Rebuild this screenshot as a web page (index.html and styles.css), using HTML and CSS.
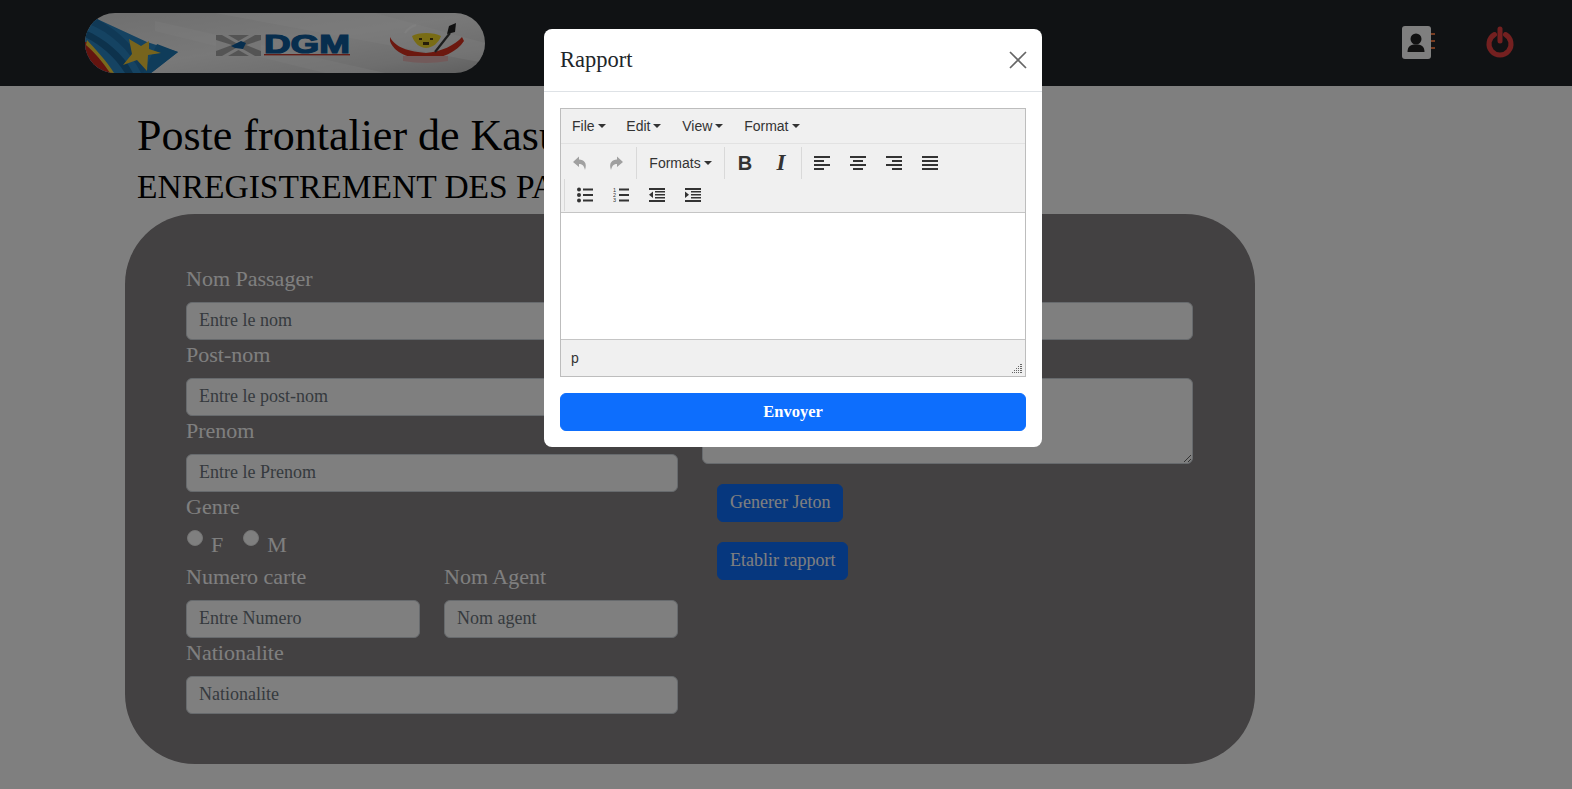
FILE: index.html
```html
<!DOCTYPE html>
<html lang="fr">
<head>
<meta charset="utf-8">
<title>Poste frontalier</title>
<link rel="stylesheet" href="styles.css">
</head>
<body>
<svg class="defs" width="0" height="0" aria-hidden="true">
  <defs>
    <linearGradient id="bannerBg" x1="0" y1="0" x2="1" y2="1">
      <stop offset="0" stop-color="#dedede"/>
      <stop offset="0.5" stop-color="#f2f2f2"/>
      <stop offset="0.8" stop-color="#dcdcdc"/>
      <stop offset="1" stop-color="#bdbdbd"/>
    </linearGradient>
    <clipPath id="bannerClip"><rect width="400" height="60" rx="30"/></clipPath>
  </defs>
</svg>
<header class="topbar">
  <svg class="banner" width="400" height="60" viewBox="0 0 400 60">
    <g clip-path="url(#bannerClip)">
      <rect width="400" height="60" fill="url(#bannerBg)"/>
      <path d="M130 0 L400 50 V30 L290 0Z" fill="#fff" opacity=".35"/>
      <path d="M70 8 L300 60 H240 L70 18Z" fill="#fff" opacity=".3"/>
      <path d="M10 5 L62 29 L93 39 L70 57 L66 60 H0 V20Z" fill="#2a86c4"/>
      <path d="M0 17 C20 26 38 40 48 60 H40 C30 44 16 32 0 24Z" fill="#1a6499"/>
      <path d="M10 5 C30 16 50 30 62 60 H56 C44 36 26 20 4 11Z" fill="#2072ac"/>
      <path d="M2 29 C10 38 20 48 27 60 H0 V29Z" fill="#c9281e"/>
      <path d="M2 27 C11 37 21 47 29 60 H25 C18 49 9 39 1 32Z" fill="#f2d23a"/>
      <path d="M70 57 L93 39 L72 31 L58 60 H66Z" fill="#1e78b4"/>
      <path d="M44 26 L56 33 L64 28 L64 36 L76 40 L63 42 L62 58 L52 47 L38 52 L47 41Z" fill="#efc93a"/>
      <path d="M131 22 h45 v21 h-45z" fill="#a9a9a9"/>
      <path d="M131 27 L147 32 L131 38Z M176 27 L161 32 L176 38Z" fill="#ececec"/>
      <path d="M137 22 L151 30 L156 30 L170 22 H164 L153.500 28 L143 22Z M137 43 L151 35 L156 35 L170 43 H164 L153.500 37 L143 43Z" fill="#ececec"/>
      <path d="M146 33 L156 28 L161 30 L158 36 L150 35Z" fill="#0f5c9c"/>
      <text class="dgm" x="179" y="40" textLength="86" lengthAdjust="spacingAndGlyphs">DGM</text>
      <rect x="179" y="41" width="86" height="1.400" fill="#c73a2c"/>
      <path d="M305 24 C309 32 318 38 341 40 C356 39 370 32 377 24 L379 28 C372 39 356 46 341 46 C325 46 309 40 305 28Z" fill="#d8301f"/>
      <path d="M327 23 C333 19 349 19 356 23 C354 30 347 35 341 35 C335 35 329 30 327 23Z" fill="#f2d92b"/>
      <path d="M334 25 h3 v2 h-3z M345 25 h3 v2 h-3z M338 29 h6 v3 h-6z" fill="#4d3d14"/>
      <path d="M350 39 L365 20" stroke="#3a3a3a" stroke-width="2.200"/>
      <path d="M362 21 L364 13 L371 10 L370 19Z" fill="#222"/>
      <path d="M318 43 H363 V48 Q341 52 318 48Z" fill="#e5b5b5"/>
      <path d="M320 20 Q324 14 331 12" stroke="#fff" stroke-width="2" fill="none"/>
    </g>
  </svg>
  <div class="actions">
    <svg class="book" width="33" height="34" viewBox="0 0 33 34">
      <rect x="0" y="0" width="29" height="33" rx="3" fill="#fff"/>
      <path d="M29 7h4v2h-4zM29 14h4v2h-4zM29 21h4v2h-4z" fill="#f07a45"/>
      <circle cx="14" cy="13" r="5.500" fill="#222"/>
      <path d="M5.500 26 C5.500 20 9 18.500 14 18.500 C19 18.500 22.500 20 22.500 26Z" fill="#222"/>
    </svg>
    <svg class="power" width="30" height="32" viewBox="0 0 30 32">
      <path d="M9.500 8.500 A11 11 0 1 0 20.500 8.500" fill="none" stroke="#e84040" stroke-width="5" stroke-linecap="round"/>
      <path d="M15 3 V15" fill="none" stroke="#e84040" stroke-width="5" stroke-linecap="round"/>
    </svg>
  </div>
</header>

<main class="page">
  <h1 class="title">Poste frontalier de Kasumbalesa</h1>
  <h3 class="subtitle">ENREGISTREMENT DES PASSAGERS</h3>
  <form class="card">
    <div class="col">
      <label class="lbl">Nom Passager</label>
      <input class="field" placeholder="Entre le nom">
      <label class="lbl">Post-nom</label>
      <input class="field" placeholder="Entre le post-nom">
      <label class="lbl">Prenom</label>
      <input class="field" placeholder="Entre le Prenom">
      <label class="lbl">Genre</label>
      <div class="radios">
        <input class="radio" type="radio" name="genre"><span class="radio-text">F</span>
        <input class="radio" type="radio" name="genre"><span class="radio-text">M</span>
      </div>
      <div class="pair">
        <div>
          <label class="lbl">Numero carte</label>
          <input class="field" placeholder="Entre Numero">
        </div>
        <div>
          <label class="lbl">Nom Agent</label>
          <input class="field" placeholder="Nom agent">
        </div>
      </div>
      <label class="lbl">Nationalite</label>
      <input class="field" placeholder="Nationalite">
    </div>
    <div class="col">
      <label class="lbl">Destination</label>
      <input class="field">
      <label class="lbl">Motif</label>
      <textarea class="field area"></textarea>
      <div class="btns">
        <button type="button" class="btn">Generer Jeton</button>
        <button type="button" class="btn">Etablir rapport</button>
      </div>
    </div>
  </form>
</main>

<div class="backdrop">
  <section class="modal">
    <div class="modal-head">
      <h5 class="modal-title">Rapport</h5>
      <svg class="close" width="18" height="18" viewBox="0 0 18 18"><path d="M1 1 L17 17 M17 1 L1 17" stroke="#666" stroke-width="1.700"/></svg>
    </div>
    <div class="modal-body">
      <div class="editor">
        <div class="menubar">
          <span class="menu-item caret">File</span>
          <span class="menu-item caret">Edit</span>
          <span class="menu-item caret">View</span>
          <span class="menu-item caret">Format</span>
        </div>
        <div class="toolbar">
          <div class="tb-row">
            <div class="tb-group first">
              <span class="tool off"><svg width="16" height="16" viewBox="0 0 16 16"><path d="M7 1.500 L1 7 L7 12 V9 C10 9 12 10.500 13 15 C15.500 8 12 4.500 7 4.500Z"/></svg></span>
              <span class="tool off"><svg width="16" height="16" viewBox="0 0 16 16"><path d="M9 1.500 L15 7 L9 12 V9 C6 9 4 10.500 3 15 C.5 8 4 4.500 9 4.500Z"/></svg></span>
            </div>
            <div class="tb-group tight">
              <span class="tool wide caret">Formats</span>
            </div>
            <div class="tb-group">
              <span class="tool"><b class="glyph-b">B</b></span>
              <span class="tool"><i class="glyph-i">I</i></span>
            </div>
            <div class="tb-group spaced">
              <span class="tool"><svg width="16" height="16" viewBox="0 0 16 16"><path d="M0 1h16v2H0zM0 5h10v2H0zM0 9h16v2H0zM0 13h10v2H0z"/></svg></span>
              <span class="tool"><svg width="16" height="16" viewBox="0 0 16 16"><path d="M0 1h16v2H0zM3 5h10v2H3zM0 9h16v2H0zM3 13h10v2H3z"/></svg></span>
              <span class="tool"><svg width="16" height="16" viewBox="0 0 16 16"><path d="M0 1h16v2H0zM6 5h10v2H6zM0 9h16v2H0zM6 13h10v2H6z"/></svg></span>
              <span class="tool"><svg width="16" height="16" viewBox="0 0 16 16"><path d="M0 1h16v2H0zM0 5h16v2H0zM0 9h16v2H0zM0 13h16v2H0z"/></svg></span>
            </div>
          </div>
          <div class="tb-row">
            <div class="tb-group indent">
              <span class="tool"><svg width="16" height="16" viewBox="0 0 16 16"><circle cx="2" cy="2.500" r="2"/><circle cx="2" cy="8" r="2"/><circle cx="2" cy="13.500" r="2"/><path d="M6 1.500h10v2H6zM6 7h10v2H6zM6 12.500h10v2H6z"/></svg></span>
              <span class="tool"><svg width="16" height="16" viewBox="0 0 16 16"><text class="nums" x="0" y="5">1</text><text class="nums" x="0" y="10">2</text><text class="nums" x="0" y="15">3</text><path d="M6 1.500h10v2H6zM6 7h10v2H6zM6 12.500h10v2H6z"/></svg></span>
              <span class="tool"><svg width="16" height="16" viewBox="0 0 16 16"><path d="M0 1h16v2H0zM6 4h10v1.500H6zM6 7h10v1.500H6zM6 10h10v1.500H6zM0 13h16v2H0zM4 4.500 V11 L0 7.750Z"/></svg></span>
              <span class="tool"><svg width="16" height="16" viewBox="0 0 16 16"><path d="M0 1h16v2H0zM6 4h10v1.500H6zM6 7h10v1.500H6zM6 10h10v1.500H6zM0 13h16v2H0zM0 4.500 V11 L4 7.750Z"/></svg></span>
            </div>
          </div>
        </div>
        <div class="edit-area"></div>
        <div class="statusbar">
          <span>p</span>
          <svg class="grip" width="10" height="10" viewBox="0 0 10 10"><path d="M8 0h2v1H8zM6 2h1v1H6zM8 2h2v1H8zM4 4h1v1H4zM6 4h1v1H6zM8 4h2v1H8zM2 6h1v1H2zM4 6h1v1H4zM6 6h1v1H6zM8 6h2v1H8zM0 8h1v1H0zM2 8h1v1H2zM4 8h1v1H4zM6 8h1v1H6zM8 8h2v1H8z" fill="#666"/></svg>
        </div>
      </div>
      <button type="button" class="send">Envoyer</button>
    </div>
  </section>
</div>
</body>
</html>
```
FILE: styles.css
```css
* { box-sizing: border-box; }
html, body { height: 100%; }
body {
  margin: 0;
  background: #fff;
  color: #000;
  font-family: "Liberation Serif", "Times New Roman", serif;
  font-size: 17.5px;
  overflow: hidden;
}
.defs { position: absolute; }

.topbar {
  height: 86px;
  background: #212529;
  display: flex;
  align-items: flex-start;
  justify-content: space-between;
  padding: 13px 57px 0 85px;
}
.banner { display: block; }
.actions {
  display: flex;
  align-items: flex-start;
  gap: 50px;
  padding-top: 13px;
}

.page { padding: 0 0 0 125px; }
.title {
  margin: 0;
  padding: 23px 0 0 12px;
  font-size: 44px;
  font-weight: 400;
  line-height: 54px;
  white-space: nowrap;
}
.subtitle {
  margin: 0;
  padding: 0 0 0 12px;
  font-size: 33.5px;
  font-weight: 400;
  line-height: 47px;
  white-space: nowrap;
}
.card {
  margin-top: 4px;
  width: 1130px;
  height: 550px;
  background: #868284;
  border-radius: 70px;
  padding: 50px 62px 50px 61px;
  display: grid;
  grid-template-columns: 492px 491px;
  column-gap: 24px;
}
.col { display: flex; flex-direction: column; }
.lbl {
  display: block;
  height: 38px;
  line-height: 30px;
  font-size: 22px;
  color: #fff;
}
.field {
  display: block;
  width: 100%;
  height: 38px;
  padding: 5px 12px 7px;
  font: 18px "Liberation Serif", serif;
  color: #212529;
  background: #fff;
  border: 1px solid #ced4da;
  border-radius: 6px;
}
.field::placeholder { color: #6c757d; opacity: 1; }
.area { height: 86px; resize: vertical; }
.radios {
  height: 32px;
  display: flex;
  align-items: flex-start;
  color: #fff;
  font-size: 22px;
  line-height: 30px;
}
.radio {
  appearance: none;
  width: 16px;
  height: 16px;
  margin: 0 8px 0 1px;
  background: #fff;
  border: 1px solid #e8e8e8;
  border-radius: 50%;
}
.radio-text { margin-right: 19px; }
.pair {
  display: grid;
  grid-template-columns: 234px 234px;
  column-gap: 24px;
}
.btns {
  display: flex;
  flex-direction: column;
  align-items: flex-start;
  gap: 20px;
  padding: 20px 0 0 15px;
}
.btn {
  height: 38px;
  padding: 0 12px 2px;
  font: 18px "Liberation Serif", serif;
  color: #fff;
  background: #0d6efd;
  border: 1px solid #0d6efd;
  border-radius: 6px;
}

.backdrop {
  position: fixed;
  inset: 0;
  background: rgba(0, 0, 0, .5);
  padding: 29px 0 0 14px;
  display: flex;
  justify-content: center;
  align-items: flex-start;
}
.modal {
  width: 498px;
  height: 418px;
  background: #fff;
  border-radius: 8px;
  display: flex;
  flex-direction: column;
}
.modal-head {
  height: 63px;
  flex: none;
  display: flex;
  align-items: center;
  justify-content: space-between;
  padding: 0 15px 0 16px;
  border-bottom: 1px solid #dee2e6;
}
.modal-title {
  margin: 0;
  font-size: 22.5px;
  font-weight: 400;
  color: #212529;
}
.modal-body { padding: 16px; }
.editor {
  height: 269px;
  border: 1px solid #bdbdbd;
  display: flex;
  flex-direction: column;
  font-family: "Liberation Sans", Arial, sans-serif;
  font-size: 14px;
  color: #333;
}
.menubar {
  height: 35px;
  flex: none;
  background: #f0f0f0;
  border-bottom: 1px solid #e2e2e2;
  display: flex;
  align-items: center;
  gap: 20.8px;
  padding-left: 11px;
}
.menu-item { display: inline-flex; align-items: center; }
.caret::after {
  content: "";
  display: inline-block;
  width: 0;
  height: 0;
  margin-left: 3px;
  border-left: 4px solid transparent;
  border-right: 4px solid transparent;
  border-top: 4px solid #333;
}
.toolbar {
  height: 69px;
  flex: none;
  background: #f0f0f0;
  border-bottom: 1px solid #c5c5c5;
  padding-top: 3px;
}
.tb-row { display: flex; height: 32px; }
.tb-group {
  display: flex;
  height: 32px;
  margin-left: 1px;
  padding-left: 2px;
  border-left: 1px solid #d9d9d9;
}
.tb-group.first { border-left: 0; margin-left: 0; padding-left: 1px; }
.tb-group.tight { margin-left: 2px; padding-left: 1px; }
.tb-group.spaced { margin-left: 2px; }
.tb-group.indent { margin-left: 3px; }
.tool {
  width: 36px;
  height: 32px;
  display: inline-flex;
  align-items: center;
  justify-content: center;
  fill: #333;
}
.tool.off { fill: #a0a0a0; }
.tool.wide { width: 85px; }
.glyph-b {
  font: 700 20px "Liberation Sans", sans-serif;
  color: #333;
}
.glyph-i {
  font: italic 700 23px "Liberation Serif", serif;
  color: #333;
}
.nums { font: 5.500px "Liberation Sans", sans-serif; }
.edit-area { flex: 1; background: #fff; }
.statusbar {
  height: 37px;
  flex: none;
  background: #f0f0f0;
  border-top: 1px solid #c5c5c5;
  padding: 0 3px 0 10px;
  display: flex;
  align-items: center;
  justify-content: space-between;
}
.grip { align-self: flex-end; margin-bottom: 2px; }
.send {
  display: block;
  width: 100%;
  height: 38px;
  margin-top: 16px;
  padding-bottom: 1px;
  font: 700 16.5px "Liberation Serif", serif;
  color: #fff;
  background: #0d6efd;
  border: 1px solid #0d6efd;
  border-radius: 6px;
}
.dgm {
  font: 700 25px "Liberation Sans", sans-serif;
  fill: #0f5c9c;
  stroke: #0f5c9c;
  stroke-width: 1.2px;
}
```
